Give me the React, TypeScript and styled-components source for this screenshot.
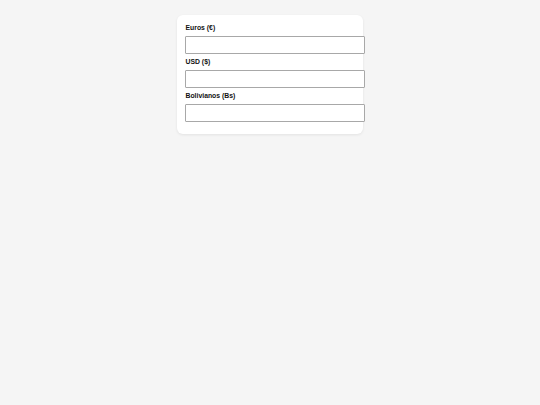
import React from "react";
import styled, { createGlobalStyle } from "styled-components";

const Global = createGlobalStyle`
  html, body { margin: 0; padding: 0; background: #f5f5f5; }
  body { font-family: "Liberation Sans", Arial, sans-serif; }
  * { box-sizing: border-box; }
`;

const Page = styled.div`
  min-height: 405px;
  padding-top: 15px;
  display: flex;
  justify-content: center;
  align-items: flex-start;
`;

const Card = styled.form`
  width: 186px;
  background: #ffffff;
  border-radius: 6px;
  padding: 8px 8px 9px;
  box-shadow: 0 1px 3px rgba(0, 0, 0, 0.08);
  display: flex;
  flex-direction: column;
`;

const Label = styled.label`
  display: block;
  font-size: 6.85px;
  line-height: 8px;
  padding: 1px 0 0 0.5px;
  font-weight: 700;
  color: #111;
  margin-bottom: 4px;
`;

const Input = styled.input`
  box-sizing: content-box;
  display: block;
  width: 100%;
  height: 16px;
  padding: 0 4px;
  margin: 0 0 3px;
  border: 1px solid #a8a8a8;
  border-radius: 1px;
  background: #fff;
  font-family: "Liberation Sans", Arial, sans-serif;
  font-size: 8px;
  outline: none;
`;

const currencies = [
  { id: "eur", label: "Euros (€)" },
  { id: "usd", label: "USD ($)" },
  { id: "bob", label: "Bolivianos (Bs)" },
];

export default function App() {
  return (
    <>
      <Global />
      <Page>
        <Card onSubmit={(e) => e.preventDefault()}>
          {currencies.map((c) => (
            <React.Fragment key={c.id}>
              <Label htmlFor={c.id}>{c.label}</Label>
              <Input id={c.id} type="text" />
            </React.Fragment>
          ))}
        </Card>
      </Page>
    </>
  );
}
